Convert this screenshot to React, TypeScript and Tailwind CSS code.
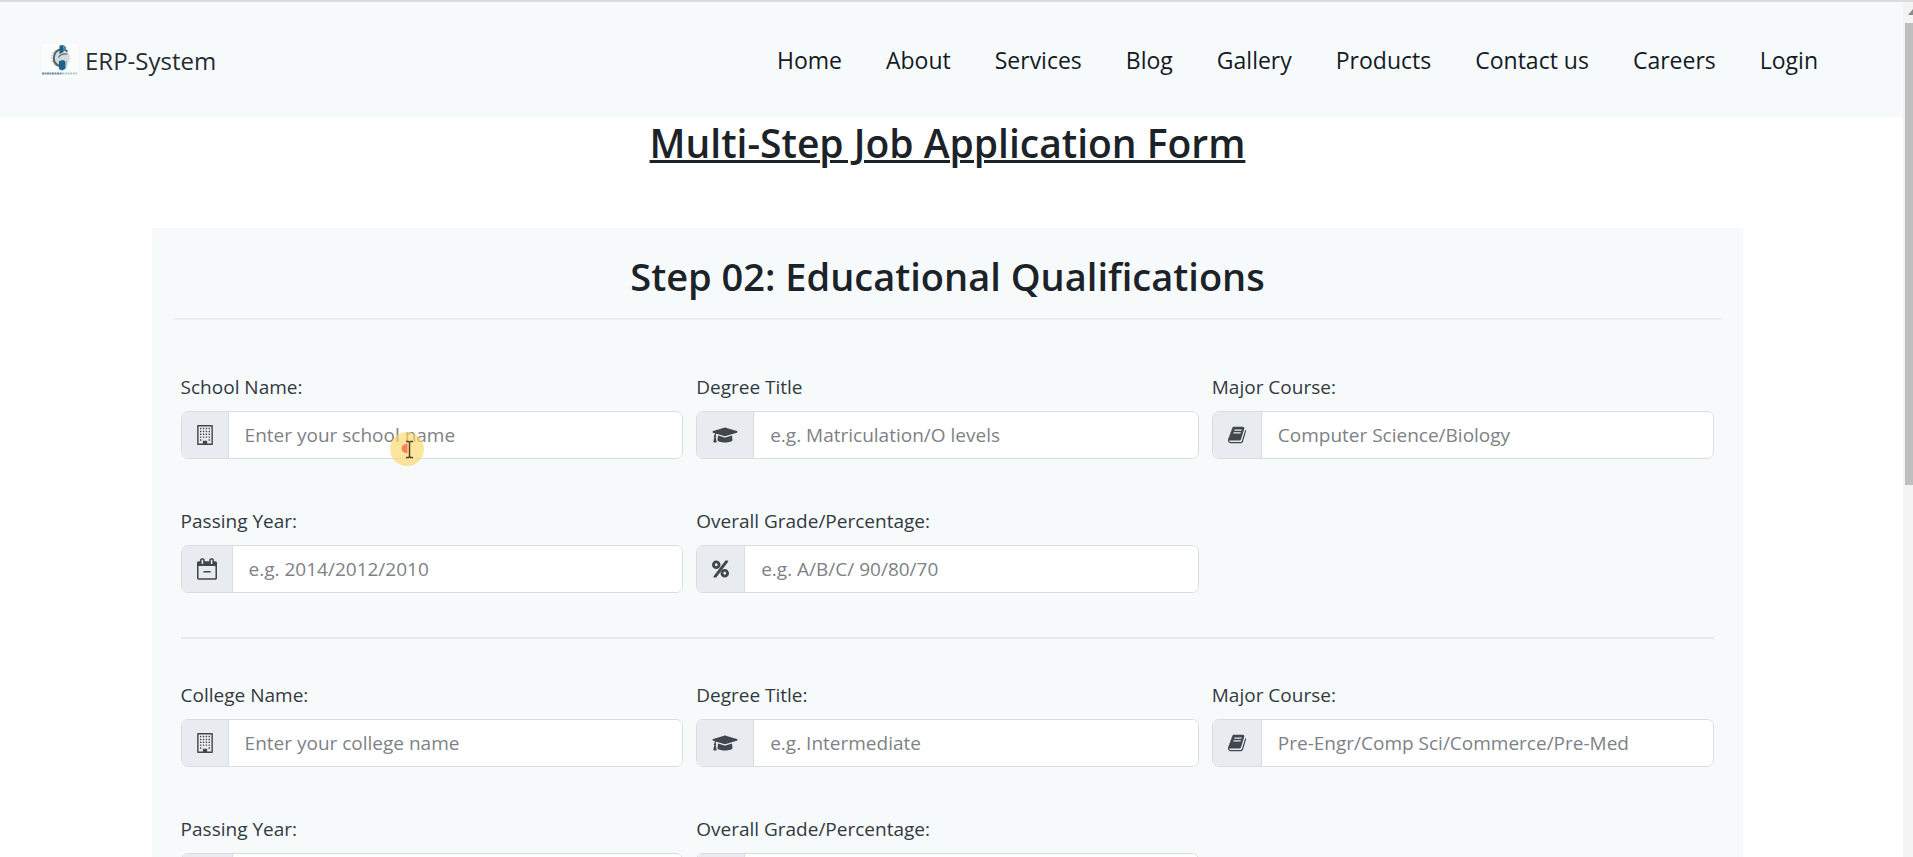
import React, { useId } from "react";
import { FaGraduationCap } from "react-icons/fa";

function BuildingIcon() {
  return (
    <svg viewBox="192 0 1408 1792" className="h-5 w-4" fill="currentColor" aria-hidden="true">
      <path
        fillRule="evenodd"
        d="M256 0h1280q26 0 45 19t19 45v1664q0 26-19 45t-45 19H256q-26 0-45-19t-19-45V64q0-26 19-45T256 0zM320 128v1536h384v-224q0-13 9.500-22.500t22.500-9.500h320q13 0 22.500 9.500t9.500 22.500v224h384V128z"
      />
      {[256, 512, 768, 1024, 1280].map((y) =>
        [448, 704, 960, 1216].map((x) =>
          y === 1280 && (x === 704 || x === 960) ? null : (
            <rect key={`${x}-${y}`} x={x} y={y} width="128" height="128" rx="28" />
          ),
        ),
      )}
    </svg>
  );
}

function CalendarIcon() {
  return (
    <svg viewBox="64 0 1664 1792" className="h-[22px] w-5" fill="currentColor" aria-hidden="true">
      <path d="M192 1664h1408v-1024h-1408v1024zm384-1216v-288q0-14-9-23t-23-9h-64q-14 0-23 9t-9 23v288q0 14 9 23t23 9h64q14 0 23-9t9-23zm768 0v-288q0-14-9-23t-23-9h-64q-14 0-23 9t-9 23v288q0 14 9 23t23 9h64q14 0 23-9t9-23zm384-64v1280q0 52-38 90t-90 38h-1408q-52 0-90-38t-38-90v-1280q0-52 38-90t90-38h128v-96q0-66 47-113t113-47h64q66 0 113 47t47 113v96h384v-96q0-66 47-113t113-47h64q66 0 113 47t47 113v96h128q52 0 90 38t38 90z" />
      <rect x="592" y="1056" width="608" height="140" rx="32" />
    </svg>
  );
}

function PercentIcon() {
  return (
    <svg viewBox="128 128 1536 1536" className="h-[18px] w-[17px]" fill="currentColor" aria-hidden="true">
      <circle cx="512" cy="512" r="256" fill="none" stroke="currentColor" strokeWidth="256" />
      <circle cx="1280" cy="1280" r="256" fill="none" stroke="currentColor" strokeWidth="256" />
      <path d="M1376 128h160q26 0 45 19t19 45q0 21-13 38l-1056 1408q-19 26-51 26h-160q-26 0-45-19t-19-45q0-21 13-38l1056-1408q19-26 51-26z" />
    </svg>
  );
}

function BookIcon() {
  return (
    <svg viewBox="64 0 1664 1792" className="h-5 w-[18px]" fill="currentColor" aria-hidden="true">
      <path d="M1703 478q40 57 18 129l-275 906q-19 64-76.500 107.500t-122.500 43.500h-923q-77 0-148.500-53.500t-99.500-131.500q-24-67-2-127 0-4 3-27t4-37q1-8-3-21.500t-3-19.500q2-11 8-21t16.500-23.500 16.500-23.500q23-38 45-91.500t30-91.500q3-10 .5-30t-.5-28q3-11 17-28t17-23q21-36 42-92t25-90q1-9-2.500-32t.5-28q4-13 22-30.500t22-22.500q19-26 42.500-84.500t27.500-96.500q1-8-3-25.500t-2-26.500q2-8 9-18t18-23 17-21q8-12 16.500-30.500t15-35 16-36 19.500-32 26.500-23.500 36-11.500 47.500 5.500l-1 3q38-9 51-9h761q74 0 114 56t18 130l-274 906q-36 119-71.500 153.500t-128.500 34.500h-869q-27 0-38 15-11 16-1 43 24 70 144 70h923q29 0 56-15.500t35-41.500l300-987q7-22 5-57 38 15 59 43zm-1064 2q-4 13 2 22.500t20 9.500h608q13 0 25.500-9.500t16.500-22.500l21-64q4-13-2-22.500t-20-9.500h-608q-13 0-25.500 9.500t-16.500 22.500zm-83 256q-4 13 2 22.500t20 9.500h608q13 0 25.500-9.500t16.500-22.500l21-64q4-13-2-22.500t-20-9.500h-608q-13 0-25.500 9.500t-16.500 22.500z" />
    </svg>
  );
}

function CapIcon() {
  return <FaGraduationCap className="h-5 w-[26px]" aria-hidden="true" />;
}

function Logo() {
  return (
    <svg viewBox="0 0 36 34" className="h-[34px] w-9" aria-hidden="true">
      <rect width="36" height="34" fill="#fbfdfd" />
      <circle cx="18.500" cy="14" r="8.500" fill="none" stroke="#ccd4d8" strokeWidth="2.500" strokeDasharray="1.500 1.300" />
      <ellipse cx="19.500" cy="13.500" rx="7.500" ry="9" fill="#d3d9dc" />
      <path d="M25.500 7.500C22 3.500 14.500 5 12.500 10.500s.5 9.500 4.500 11.500" fill="none" stroke="#56646c" strokeWidth="2" />
      <path d="M16.500 13.500q2-4 9-3.500" fill="none" stroke="#5b6a72" strokeWidth="1.200" />
      <path d="M17.500 1.500l4-.5v7l-4 2z" fill="#1d5f85" />
      <path d="M21.500 1l2.500 2v3.500l-2.500-.5z" fill="#3b8fa9" />
      <path d="M17 17l4-1 2 1v8l-3 1.500-3-1.500z" fill="#1d6288" />
      <path d="M23 17.500l1.500-.5v7l-1.500 1z" fill="#6bb0bd" />
      <path d="M0 29.500h20" stroke="#5f8d9f" strokeWidth="2" strokeDasharray="2 .5" />
      <path d="M20 29.500h15" stroke="#a9c6cf" strokeWidth="2" strokeDasharray="2 .7" />
    </svg>
  );
}

function Pointer() {
  return (
    <svg
      viewBox="0 0 36 36"
      className="pointer-events-none absolute top-5 left-[208px] size-9"
      aria-hidden="true"
    >
      <circle cx="18" cy="18" r="17" fill="#fbd768" fillOpacity="0.66" />
      <path d="M18.500 12.500q-6 1-6 5t6 5z" fill="#f4694b" fillOpacity="0.8" />
      <path
        d="M17 10.500h2.500l1 1 1-1h2.500M20.500 11v15M17 26.500h2.500l1-1 1 1h2.500"
        fill="none"
        stroke="#5a4426"
        strokeWidth="1.500"
      />
    </svg>
  );
}

type FieldProps = {
  label: string;
  placeholder: string;
  icon: React.ReactNode;
  children?: React.ReactNode;
};

function Field({ label, placeholder, icon, children }: FieldProps) {
  const id = useId();
  return (
    <div className="flex flex-col gap-2.5">
      <label htmlFor={id} className="leading-7 text-[#33393e]">
        {label}
      </label>
      <div className="relative">
        <div className="flex h-12 overflow-hidden rounded-[7px] border border-[#d6dee2] bg-white">
          <span className="flex items-center border-r border-[#d6dee2] bg-[#e8ecf0] px-[15px] text-[#41474d]">
            {icon}
          </span>
          <input
            id={id}
            type="text"
            placeholder={placeholder}
            className="min-w-0 flex-1 bg-white px-4 text-[#212529] outline-none placeholder:text-[#7d8286]"
          />
        </div>
        {children}
      </div>
    </div>
  );
}

type SectionProps = {
  name: string;
  namePlaceholder: string;
  titleLabel: string;
  titlePlaceholder: string;
  coursePlaceholder: string;
  overlay?: React.ReactNode;
};

function Section(p: SectionProps) {
  return (
    <section className="grid grid-cols-3 gap-x-[13px] gap-y-12">
      <Field label={p.name} placeholder={p.namePlaceholder} icon={<BuildingIcon />}>
        {p.overlay}
      </Field>
      <Field label={p.titleLabel} placeholder={p.titlePlaceholder} icon={<CapIcon />} />
      <Field label="Major Course:" placeholder={p.coursePlaceholder} icon={<BookIcon />} />
      <Field label="Passing Year:" placeholder="e.g. 2014/2012/2010" icon={<CalendarIcon />} />
      <Field label="Overall Grade/Percentage:" placeholder="e.g. A/B/C/ 90/80/70" icon={<PercentIcon />} />
    </section>
  );
}

const links = ["Home", "About", "Services", "Blog", "Gallery", "Products", "Contact us", "Careers", "Login"];

export default function App() {
  return (
    <div className="flex h-screen overflow-hidden bg-white font-['Open_Sans','Noto_Sans',sans-serif] text-[19px] text-[#1b2329]">
      <div className="min-w-0 flex-1">
        <header className="flex h-[117px] items-center justify-between border-t-2 border-[#dcdcdc] bg-[#f6fafb] pt-0.5 pr-[85px] pl-[42px]">
          <a href="#" className="flex items-center gap-[7px] text-[24px] text-[#262c31]">
            <Logo />
            ERP-System
          </a>
          <nav className="flex gap-11 text-[23px] text-[#141a1f]">
            {links.map((link) => (
              <a key={link} href="#">
                {link}
              </a>
            ))}
          </nav>
        </header>
        <main className="pr-2">
          <h1 className="pt-0.5 text-center text-[39px] leading-[48px] font-semibold underline decoration-[3px]">
            Multi-Step Job Application Form
          </h1>
          <form className="mx-auto mt-[61px] w-[84%] bg-[#f6fafb] px-[22px] pt-6">
            <h2 className="border-b-2 border-[#e9eef0] pb-[18px] text-center text-[38px] leading-[48px] font-semibold">
              Step 02: Educational Qualifications
            </h2>
            <div className="px-[7px] pt-[53px]">
              <Section
                name="School Name:"
                namePlaceholder="Enter your school name"
                titleLabel="Degree Title"
                titlePlaceholder="e.g. Matriculation/O levels"
                coursePlaceholder="Computer Science/Biology"
                overlay={<Pointer />}
              />
              <hr className="mt-11 mb-[42px] border-t-2 border-[#e5ebed]" />
              <Section
                name="College Name:"
                namePlaceholder="Enter your college name"
                titleLabel="Degree Title:"
                titlePlaceholder="e.g. Intermediate"
                coursePlaceholder="Pre-Engr/Comp Sci/Commerce/Pre-Med"
              />
            </div>
          </form>
        </main>
      </div>
      <div className="flex w-2.5 flex-col overflow-hidden border-t-2 border-[#dcdcdc] bg-[#f3f3f3] pl-0.5" aria-hidden="true">
        <svg viewBox="0 0 8 21" className="h-[21px] w-2 shrink-0">
          <path d="M3 13l5-6v6z" fill="#8c8c8c" />
        </svg>
        <div className="h-[54%] bg-[#bfbfbf]" />
      </div>
    </div>
  );
}
